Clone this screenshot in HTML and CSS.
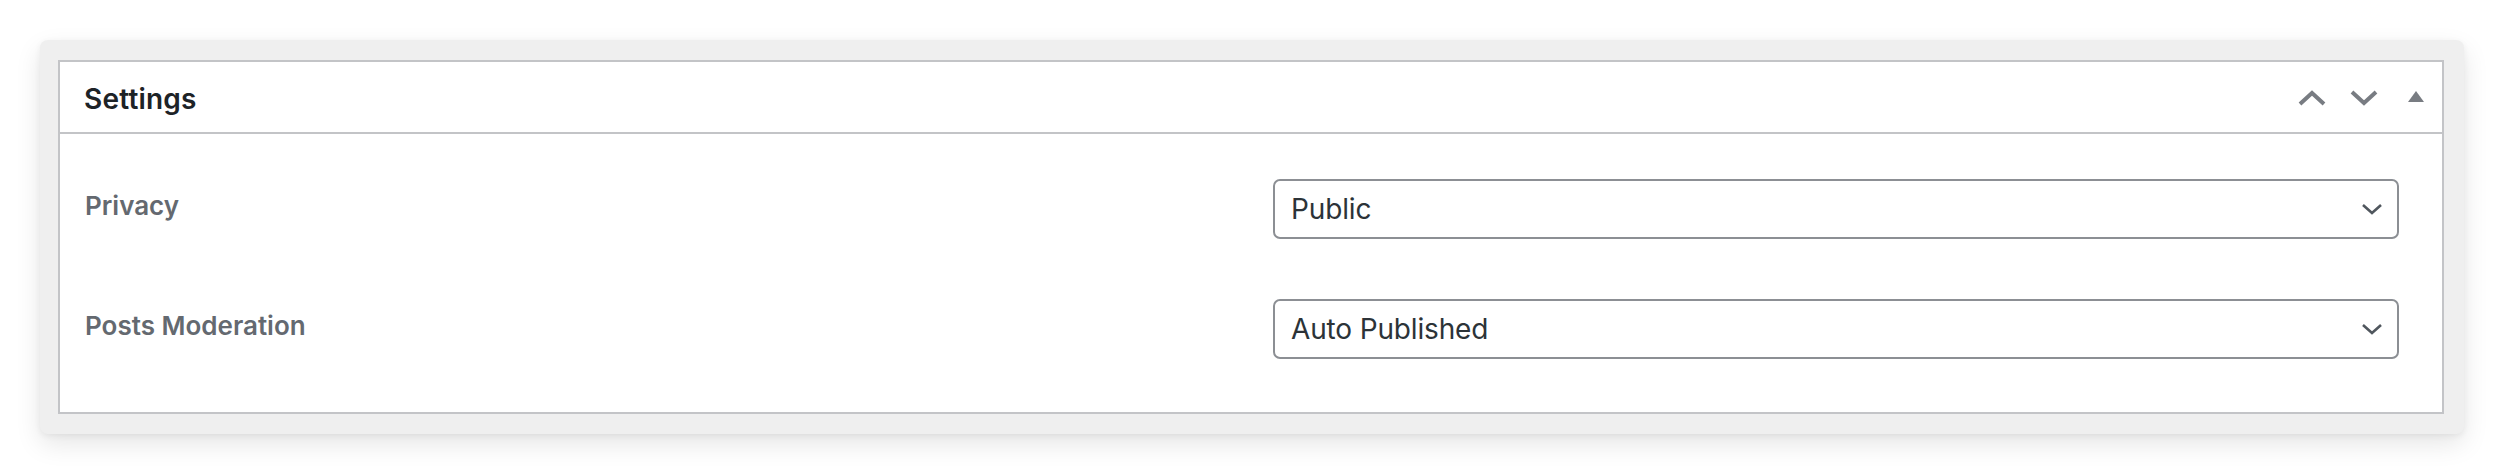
FILE: index.html
```html
<!DOCTYPE html>
<html lang="en">
<head>
<meta charset="utf-8">
<title>Settings</title>
<link rel="stylesheet" href="styles.css">
</head>
<body>
<div class="frame">
  <div class="postbox">
    <div class="postbox-header">
      <h2 class="hndle">Settings</h2>
      <div class="handle-actions">
        <button class="handle-btn" type="button" aria-label="Move up">
          <svg width="28" height="16" viewBox="0 0 28 16"><polyline points="2,14 14,3 26,14" fill="none" stroke="#787c82" stroke-width="4" stroke-linejoin="miter"/></svg>
        </button>
        <button class="handle-btn" type="button" aria-label="Move down">
          <svg width="28" height="16" viewBox="0 0 28 16"><polyline points="2,2 14,13 26,2" fill="none" stroke="#787c82" stroke-width="4" stroke-linejoin="miter"/></svg>
        </button>
        <button class="handle-btn toggle" type="button" aria-label="Toggle panel">
          <svg width="16" height="11" viewBox="0 0 16 11"><polygon points="8,0 16,11 0,11" fill="#787c82"/></svg>
        </button>
      </div>
    </div>
    <div class="inside">
      <div class="row">
        <label class="field-label" for="privacy">Privacy</label>
        <div class="select-wrap">
          <select id="privacy" class="field-select">
            <option>Public</option>
            <option>Private</option>
          </select>
          <svg class="select-arrow" width="22" height="12" viewBox="0 0 22 12"><polyline points="2,2 11,10 20,2" fill="none" stroke="#50575e" stroke-width="2.6"/></svg>
        </div>
      </div>
      <div class="row">
        <label class="field-label" for="moderation">Posts Moderation</label>
        <div class="select-wrap">
          <select id="moderation" class="field-select">
            <option>Auto Published</option>
            <option>Require Approval</option>
          </select>
          <svg class="select-arrow" width="22" height="12" viewBox="0 0 22 12"><polyline points="2,2 11,10 20,2" fill="none" stroke="#50575e" stroke-width="2.6"/></svg>
        </div>
      </div>
    </div>
  </div>
</div>
</body>
</html>
```
FILE: styles.css
```css
* { box-sizing: border-box; }

html, body {
  margin: 0;
  background: #ffffff;
}

body {
  padding: 40px;
  font-family: Inter, "Noto Sans", "Liberation Sans", sans-serif;
}

.frame {
  background: #efefef;
  border-radius: 8px;
  padding: 20px 20px 20px 18px;
  box-shadow: 0 10px 26px rgba(0, 0, 0, 0.10), 0 2px 6px rgba(0, 0, 0, 0.06);
}

.postbox {
  background: #ffffff;
  border: 2px solid #c3c4c7;
}

.postbox-header {
  display: flex;
  align-items: center;
  justify-content: space-between;
  height: 72px;
  border-bottom: 2px solid #c3c4c7;
  padding: 0 0 0 24px;
}

.hndle {
  margin: 0;
  padding-top: 3px;
  font-size: 28px;
  font-weight: 600;
  color: #1d2327;
  letter-spacing: 0.2px;
}

.handle-actions {
  display: flex;
  align-items: center;
  padding-top: 2px;
}

.handle-btn {
  display: flex;
  align-items: center;
  justify-content: center;
  width: 52px;
  height: 70px;
  padding: 0;
  border: 0;
  background: transparent;
}

.handle-btn.toggle {
  padding-bottom: 3px;
}

.inside {
  display: flex;
  flex-direction: column;
  gap: 60px;
  padding: 45px 43px 53px 25px;
}

.row {
  display: grid;
  grid-template-columns: 1fr 1126px;
  align-items: center;
}

.field-label {
  font-size: 26px;
  font-weight: 600;
  color: #646970;
  padding-bottom: 7px;
}

.select-wrap {
  position: relative;
}

.field-select {
  appearance: none;
  -webkit-appearance: none;
  display: block;
  width: 100%;
  height: 60px;
  margin: 0;
  padding: 0 48px 0 16px;
  border: 2px solid #8c8f94;
  border-radius: 7px;
  background: #ffffff;
  font-family: Inter, "Noto Sans", "Liberation Sans", sans-serif;
  font-size: 28px;
  font-weight: 400;
  letter-spacing: -0.15px;
  color: #2c3338;
}

.select-arrow {
  position: absolute;
  right: 16px;
  top: 24px;
  pointer-events: none;
}
```
